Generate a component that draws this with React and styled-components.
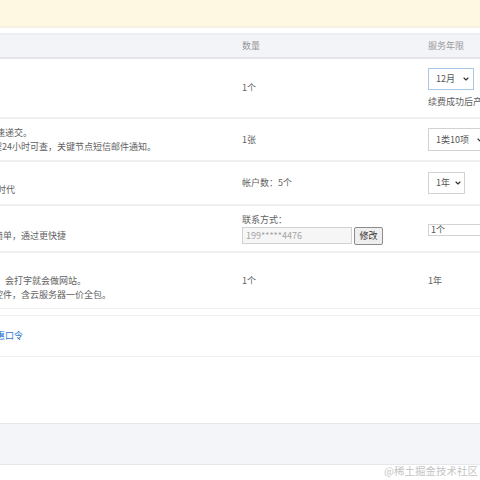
import styled, { createGlobalStyle } from "styled-components";
import { ChevronDown } from "lucide-react";

const GlobalStyle = createGlobalStyle`
  html, body {
    margin: 0;
    padding: 0;
    overflow: hidden;
    background: #fff;
  }
  body {
    font-family: "Noto Sans CJK SC", "Noto Sans", sans-serif;
    font-size: 9px;
    color: #666;
  }
`;

const Page = styled.div`
  position: relative;
  width: 480px;
  height: 480px;
  overflow: hidden;
  white-space: nowrap;
`;

const Banner = styled.div`
  height: 26px;
  background: #fef7e2;
  border-bottom: 2px solid #f6f1e2;
  margin-bottom: 5px;
`;

const Grid = styled.div`
  display: grid;
  grid-template-columns: 242px 186px 52px;
  align-items: center;
  box-sizing: content-box;
  height: ${(p) => p.h}px;
`;

const HeadRow = styled(Grid)`
  background: #f3f4f7;
  border-top: 2px solid #eceef1;
  border-bottom: 2px solid #e4e6e9;
  color: #999;
  line-height: 14px;
`;

const Row = styled(Grid)`
  border-bottom: ${(p) => p.line || 2}px solid #efefef;
  border-top: ${(p) => (p.top ? "1px solid #efefef" : "none")};
  line-height: 14px;
`;

const Gap = styled.div`
  height: ${(p) => p.h}px;
`;

const Desc = styled.div`
  display: flex;
  flex-direction: column;
  overflow: hidden;
  align-self: stretch;
  justify-content: center;
`;

const DescLine = styled.div`
  margin-left: ${(p) => p.shift || 0}px;
  height: 14px;
  color: ${(p) => (p.link ? "#2b78d0" : "#616161")};
`;

const Cell = styled.div`
  display: flex;
  flex-direction: column;
  align-items: flex-start;
  overflow: visible;
  color: #616161;
`;

const Stack = styled(Cell)`
  align-self: start;
  padding-top: ${(p) => p.top}px;
`;

const Select = styled.div`
  display: inline-flex;
  align-items: center;
  justify-content: space-between;
  box-sizing: border-box;
  width: ${(p) => p.w}px;
  height: ${(p) => p.h}px;
  padding: 0 ${(p) => p.pr || 3}px 0 7px;
  border: 1px solid ${(p) => (p.focus ? "#a7c8e8" : "#d2d2d2")};
  background: #fff;
  color: #555;
  flex-shrink: 0;

  svg {
    color: #333;
    flex-shrink: 0;
  }
`;

const Note = styled.div`
  margin-top: 5px;
  color: #616161;
`;

const Label = styled.div`
  color: #616161;
`;

const Controls = styled.div`
  display: flex;
  align-items: center;
  gap: 2px;
`;

const PhoneInput = styled.div`
  box-sizing: border-box;
  width: 110px;
  height: 17px;
  padding-left: 3px;
  line-height: 15px;
  background: #f6f6f6;
  border: 1px solid #d2d2d2;
  color: #a5a5a5;
`;

const Button = styled.div`
  box-sizing: border-box;
  width: 29px;
  height: 18px;
  line-height: 16px;
  text-align: center;
  background: #efefef;
  border: 1px solid #8c8c8c;
  border-radius: 2px;
  color: #333;
`;

const SmallInput = styled.div`
  box-sizing: border-box;
  width: 60px;
  height: 12px;
  line-height: 10px;
  padding-left: 2px;
  border: 1px solid #d2d2d2;
  color: #555;
  margin-top: 3px;
`;

const Footer = styled.div`
  height: 40px;
  background: #f4f5f8;
  border-top: 1px solid #e6e7ea;
  border-bottom: 1px solid #e6e7ea;
`;

const Watermark = styled.div`
  position: absolute;
  right: 2px;
  bottom: 2px;
  font-size: 10.5px;
  line-height: 14px;
  color: #c4c4c4;
`;

const Chevron = () => <ChevronDown size={8} strokeWidth={3.5} />;

export default function App() {
  return (
    <Page>
      <GlobalStyle />
      <Banner />

      <HeadRow h={22}>
        <div />
        <div>数量</div>
        <div>服务年限</div>
      </HeadRow>

      <Row h={58}>
        <div />
        <Cell>1个</Cell>
        <Stack top={9}>
          <Select w={46} h={22} focus>
            12月
            <Chevron />
          </Select>
          <Note>续费成功后产品到期时间</Note>
        </Stack>
      </Row>

      <Row h={41}>
        <Desc>
          <DescLine shift={-4}>速递交。</DescLine>
          <DescLine shift={-7}>程24小时可查，关键节点短信邮件通知。</DescLine>
        </Desc>
        <Cell>1张</Cell>
        <Cell>
          <Select w={60} h={23}>
            1类10项
            <Chevron />
          </Select>
        </Cell>
      </Row>

      <Row h={42}>
        <Desc>
          <DescLine />
          <DescLine shift={-3}>时代</DescLine>
        </Desc>
        <Cell>帐户数：5个</Cell>
        <Cell>
          <Select w={37} h={22} pr={2}>
            1年
            <Chevron />
          </Select>
        </Cell>
      </Row>

      <Row h={45}>
        <Desc>
          <DescLine />
          <DescLine shift={-6}>简单，通过更快捷</DescLine>
        </Desc>
        <Cell>
          <Label>联系方式：</Label>
          <Controls>
            <PhoneInput>199*****4476</PhoneInput>
            <Button>修改</Button>
          </Controls>
        </Cell>
        <Cell>
          <SmallInput>1个</SmallInput>
        </Cell>
      </Row>

      <Row h={55} line={1}>
        <Desc>
          <DescLine />
          <DescLine shift={-4}>，会打字就会做网站。</DescLine>
          <DescLine shift={-6}>控件，含云服务器一价全包。</DescLine>
        </Desc>
        <Cell>1个</Cell>
        <Cell>1年</Cell>
      </Row>

      <Gap h={6} />

      <Row h={40} line={1} top>
        <Desc>
          <DescLine shift={-4} link>
            惠口令
          </DescLine>
        </Desc>
        <div />
        <div />
      </Row>

      <Gap h={66} />
      <Footer />

      <Watermark>@稀土掘金技术社区</Watermark>
    </Page>
  );
}
